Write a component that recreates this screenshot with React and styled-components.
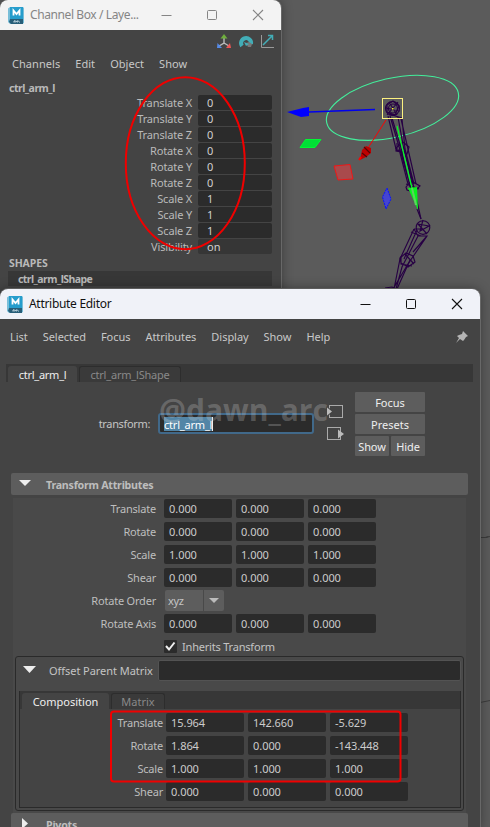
import React from 'react';
import styled, { createGlobalStyle } from 'styled-components';

const GlobalStyle = createGlobalStyle`
  body { margin: 0; background: #5b5b5b; }
  * { box-sizing: border-box; }
`;

const Desktop = styled.div`
  position: relative;
  width: 490px;
  height: 827px;
  overflow: hidden;
  background: #5b5b5b;
  font-family: 'Noto Sans', sans-serif;
  font-size: 11px;
  line-height: 16px;
  color: #c4c4c4;
  white-space: nowrap;
`;

const Overlay = styled.svg`
  position: absolute;
  left: 0;
  top: 0;
  pointer-events: none;
`;

const Window = styled.section`
  position: absolute;
  left: 0;
  top: ${(p) => p.$top}px;
  width: ${(p) => p.$width}px;
  height: ${(p) => p.$height}px;
  background: #444;
  border-radius: 8px 8px 0 0;
  box-shadow: 1px 0 0 #686868, 0 -1px 0 #5c5c5c, 0 0 12px rgba(0, 0, 0, 0.4);
  overflow: hidden;
`;

const TitleBar = styled.header`
  display: flex;
  align-items: center;
  height: 30px;
  padding-left: ${(p) => (p.$active ? 7 : 8)}px;
  background: ${(p) => (p.$active ? '#f0f2f8' : '#f3f3f3')};
  color: ${(p) => (p.$active ? '#111' : '#858585')};
`;

const Title = styled.span`
  flex: 1;
  margin-left: 6px;
  font-size: 12px;
  letter-spacing: ${(p) => p.$tracking || 0}px;
`;

const WindowButtons = styled.div`
  display: flex;
  align-items: center;
  gap: 34px;
  margin-right: ${(p) => p.$right}px;
  svg { display: block; }
`;

const MenuBar = styled.nav`
  display: flex;
  gap: ${(p) => p.$gap}px;
  padding-left: ${(p) => p.$left}px;
  color: #c8c8c8;
  letter-spacing: ${(p) => p.$tracking}px;
`;

const ChannelTools = styled.div`
  display: flex;
  justify-content: flex-end;
  gap: 6px;
  padding: 4px 7px 0 0;
  height: 26px;
`;

const NodeName = styled.h2`
  margin: 9px 0 0 9px;
  height: 14px;
  font-size: 10.5px;
  line-height: 14px;
  font-weight: 700;
  letter-spacing: -0.5px;
  color: #b9b9b9;
`;

const ChannelRow = styled.div`
  display: grid;
  grid-template-columns: 192px 74px;
  column-gap: 6px;
  height: 16px;
  text-align: right;
  letter-spacing: -0.15px;
  color: #bababa;
`;

const ChannelField = styled.div`
  height: 15px;
  padding-left: 9px;
  border-radius: 2px;
  background: ${(p) => (p.$soft ? '#363636' : '#2b2b2b')};
  color: #d0d0d0;
  letter-spacing: 0;
  text-align: left;
`;

const ShapesTitle = styled.h3`
  margin: 1px 0 0 9px;
  height: 15px;
  font-size: 10.5px;
  line-height: 15px;
  letter-spacing: -0.1px;
  color: #b9b9b9;
`;

const ShapeName = styled.div`
  width: 264px;
  height: 15px;
  margin: 0 0 0 8px;
  padding-left: 10px;
  background: #373737;
  font-size: 10.5px;
  font-weight: 700;
  letter-spacing: -0.55px;
  color: #bababa;
`;

const AttributeMenu = styled.div`
  display: flex;
  align-items: center;
  justify-content: space-between;
  height: 36px;
  padding-right: 12px;
`;

const TabBar = styled.div`
  display: flex;
  align-items: flex-end;
  gap: 2px;
  height: 18px;
  padding-left: 2px;
  margin: ${(p) => p.$margin || 0};
  background: #373737;
`;

const Tab = styled.div`
  width: ${(p) => p.$width}px;
  height: 16px;
  text-align: center;
  border-radius: 3px 3px 0 0;
  letter-spacing: ${(p) => p.$tracking || 0}px;
  background: ${(p) => (p.$active ? '#444' : '#3a3a3a')};
  color: ${(p) => (p.$active ? '#efefef' : '#898989')};
  border: ${(p) => (p.$active ? '0' : '1px solid #2d2d2d')};
  border-bottom: 0;
  line-height: ${(p) => (p.$active ? 17 : 16)}px;
`;

const NodeHeader = styled.div`
  display: grid;
  grid-template-columns: 150px 156px 24px 70px;
  column-gap: 8px;
  height: 91px;
  padding-top: 10px;
`;

const NodeType = styled.label`
  margin-top: 24px;
  text-align: right;
  letter-spacing: -0.35px;
`;

const NameInput = styled.div`
  height: 21px;
  margin-top: 21px;
  padding: 2px 4px;
  border: 2px solid #41698a;
  border-radius: 3px;
  background: #2b2b2b;
  color: #fff;
  letter-spacing: -0.2px;
  line-height: 15px;
`;

const Selection = styled.span`
  display: inline-block;
  height: 14px;
  background: #5285a6;
  border-right: 1px solid #eee;
`;

const Connectors = styled.div`
  display: flex;
  flex-direction: column;
  gap: 8px;
  margin: 13px 0 0 5px;
  svg { display: block; }
`;

const ButtonGrid = styled.div`
  display: grid;
  grid-template-columns: 34px 34px;
  grid-auto-rows: 20px;
  gap: 2px;
  margin-left: 1px;
`;

const Button = styled.button`
  grid-column: ${(p) => (p.$wide ? 'span 2' : 'auto')};
  padding: 0;
  border: 0;
  border-radius: 1px;
  background: #5d5d5d;
  color: #eee;
  font: inherit;
  letter-spacing: ${(p) => (p.$wide ? 0 : -0.1)}px;
  line-height: 22px;
`;

const SectionHeader = styled.div`
  display: flex;
  align-items: center;
  width: 457px;
  height: 22px;
  margin-left: 11px;
  border-radius: 2px;
  background: #5d5d5d;
  font-weight: 700;
  color: #bdbdbd;
  svg { margin-left: ${(p) => p.$arrow}px; margin-bottom: 2px; }
  span { margin-left: ${(p) => p.$text}px; padding-top: 2px; font-size: 10.7px; letter-spacing: -0.25px; }
`;

const SectionBody = styled.div`
  width: 453px;
  height: 315px;
  margin: 3px 0 0 13px;
  padding-top: 1px;
  background: #494949;
`;

const AttrRow = styled.div`
  display: grid;
  grid-template-columns: ${(p) => p.$label}px repeat(3, ${(p) => p.$field}px);
  column-gap: 4px;
  height: 23px;
  line-height: 20px;
  > label { text-align: right; margin-right: ${(p) => p.$pad}px; letter-spacing: -0.2px; color: #bebebe; }
`;

const Field = styled.div`
  height: 19px;
  padding-left: 5px;
  border-radius: 2px;
  background: #2b2b2b;
  color: #ccc;
  letter-spacing: -0.05px;
  line-height: 20px;
`;

const Combo = styled.div`
  display: grid;
  grid-template-columns: 38px 20px;
  gap: 1px;
  width: 59px;
  height: 20px;
  margin: -1px 0 0 1px;
  > span { background: #5d5d5d; padding-left: 3px; border-radius: 2px 0 0 2px; line-height: 21px; letter-spacing: -0.3px; }
  > i { display: grid; place-items: center; background: #5d5d5d; border-radius: 0 2px 2px 0; }
`;

const CheckRow = styled.label`
  display: flex;
  align-items: center;
  gap: 5px;
  height: 19px;
  padding-left: 151px;
  letter-spacing: -0.2px;
  svg { display: block; }
`;

const MatrixFrame = styled.div`
  width: 449px;
  height: 155px;
  margin-left: 2px;
  border: 1px solid #2a2a2a;
  border-radius: 3px;
`;

const MatrixHeader = styled.div`
  display: grid;
  grid-template-columns: 33px 109px 303px;
  height: 34px;
  padding-top: 3px;
  line-height: 22px;
  letter-spacing: -0.05px;
  svg { margin: 6px 0 0 7px; }
`;

const MatrixField = styled.div`
  height: 21px;
  border: 1px solid #535353;
  border-radius: 2px;
  background: #2b2b2b;
`;

const MatrixPanel = styled.div`
  width: 442px;
  height: 117px;
  margin-left: 3px;
  border: 1px solid #2a2a2a;
  border-top: 0;
  background: #444;
`;

const MatrixRows = styled.div`
  padding-top: 4px;
`;

const Watermark = styled.div`
  position: absolute;
  left: 159px;
  top: 391px;
  font-family: 'Open Sans', sans-serif;
  font-size: 30px;
  line-height: 38px;
  font-weight: 700;
  color: rgba(210, 210, 210, 0.26);
`;

function MayaLogo() {
  return (
    <svg width="16" height="17" viewBox="0 0 16 17">
      <path d="M0 1.5L2 0H15L16 1V16L14 17H2L0 15Z" fill="#79bed8" />
      <path d="M2 0H15V12H2Z" fill="#269dcc" />
      <path d="M2 12H15V17H3L1 15Z" fill="#285e78" />
      <path d="M5.5 8.5V3.5L8.5 7L11.5 3.5V8.5" fill="none" stroke="#fff" strokeWidth="1.8" />
      <path d="M6 15.5V14L7.2 13.7V15.5M8.3 15L9.3 13.7V15.5M10.4 13.7L11.5 15.5" fill="none" stroke="#c8dce5" />
    </svg>
  );
}

function Controls({ right }) {
  return (
    <WindowButtons $right={right}>
      <svg width="12" height="12"><path d="M1.5 6.5H11.5" stroke="currentColor" /></svg>
      <svg width="12" height="12"><rect x="1.5" y="1.5" width="9" height="9" rx="1" fill="none" stroke="currentColor" /></svg>
      <svg width="12" height="12"><path d="M1 1L11 11M11 1L1 11" stroke="currentColor" strokeWidth="1.1" /></svg>
    </WindowButtons>
  );
}

function Arrow({ w = 12, h = 6, color = '#eee' }) {
  return <svg width={w} height={h}><path d={`M0 0H${w}L${w / 2} ${h}Z`} fill={color} /></svg>;
}

function Viewport() {
  return (
    <Overlay width="490" height="827" viewBox="0 0 490 827">
      <ellipse cx="392.5" cy="107.8" rx="67.5" ry="29.5" transform="rotate(-13 392.5 107.8)" fill="none" stroke="#43ef9c" strokeWidth="1.1" />
      <g fill="none" stroke="#270044" strokeWidth="1.15">
        <circle cx="392.5" cy="108.5" r="7" />
        <circle cx="393" cy="108.5" r="4.5" />
        <path d="M387 105L393 101L399 106L395 115L387 112ZM389 114L402 118M386 108L400 111M389 102L397 115M398 102L387 115" />
        <path d="M388 116L396 149M390 116L400 150L411 189M398 117L404 150L413 184L421 219M402 119L405 149L414 184M392 118L401 148L410 187M401 119L408 149L416 184" />
        <path d="M396 148L403 142L409 147L407 154L401 152L396 151ZM397 143V150L404 152M399 149L408 184M405 150L412 185" />
        <path d="M406 187L411 181L420 186L414 192L407 190ZM406 184L419 189M417 209L421 219" />
        <circle cx="423" cy="227.5" r="6.8" />
        <path d="M423 220L420 231L429 226L418 224L427 234M414 229H422M414 229L418 236H427L408 264L393 289M414 229L400 259L394 289M417 230L404 259M418 236L402 267L396 289M427 236L413 252M411 232L421 236" />
        <path d="M400 258L406 253L413 256L415 262L408 267L401 263ZM401 256V264L412 266M405 254L414 264M385 288L392 287L396 289M410 260L397 289" />
      </g>
      <path d="M375 109.5L309 112" stroke="#0000ee" strokeWidth="1.3" />
      <path d="M287 112L303 108L309 107V116L301 117Z" fill="#0000ff" />
      <path d="M386 120L368 148" stroke="#f00" />
      <path d="M362 150L366 146L371 148V153L366 157L360 160Z" fill="#bd0000" />
      <path d="M364 147L370 153M362 153L367 157" stroke="#560000" strokeWidth="1.2" />
      <path d="M361 157L359 160" stroke="#f00" strokeWidth="2" />
      <path d="M305.5 139.5L321 139.5L315 147.5L300 147.5Z" fill="#00df36" stroke="#00f832" />
      <path d="M334 166L350 164.5L353 179L338 180Z" fill="#a94a4c" stroke="#ef1717" />
      <path d="M387 188L391 199L386 209L382.5 197Z" fill="#4545d2" stroke="#0712ff" strokeDasharray="2 1" />
      <path d="M397 126L412 188" stroke="#00ff26" strokeWidth="1.2" />
      <path d="M408 188L417 187L418 210Z" fill="#08f51d" />
      <path d="M412 188L416 205" stroke="#5dd45e" strokeWidth="2" />
      <rect x="382.5" y="98.5" width="20" height="20" fill="none" stroke="#fcf180" />
      <rect x="392" y="108" width="1.5" height="1.5" fill="#ffff26" />
      <path d="M480 537.5H486L490 536.5M480 702.5L485 701.5L490 700.5" stroke="#3b3b3b" />
    </Overlay>
  );
}

const channels = [
  ['Translate X', '0'], ['Translate Y', '0'], ['Translate Z', '0'],
  ['Rotate X', '0'], ['Rotate Y', '0'], ['Rotate Z', '0'],
  ['Scale X', '1'], ['Scale Y', '1'], ['Scale Z', '1'], ['Visibility', 'on'],
];

function VectorRow({ label, values, matrix }) {
  return (
    <AttrRow $label={matrix ? 142 : 147} $field={matrix ? 78 : 68} $pad={matrix ? -1 : 4}>
      <label>{label}</label>
      {values.map((v, i) => <Field key={i}>{v}</Field>)}
    </AttrRow>
  );
}

function ChannelBox() {
  return (
    <Window $top={0} $width={281} $height={300}>
      <TitleBar>
        <MayaLogo />
        <Title $tracking={-0.4}>Channel Box / Laye...</Title>
        <Controls right={17} />
      </TitleBar>
      <ChannelTools>
        <svg width="16" height="16">
          <path d="M8 4V9L3 12M8 9L13 12" fill="none" stroke="#bbb" strokeWidth="1.4" />
          <path d="M4.5 4.5L8 0L11.5 4.5Z" fill="#6faf3d" /><path d="M1.5 9L6 14H1Z" fill="#568be8" /><path d="M14 9L15 14H10Z" fill="#ed5655" />
        </svg>
        <svg width="16" height="16">
          <path d="M4 12A5 5 0 1 1 13 10" fill="none" stroke="#42adb7" strokeWidth="4" />
          <path d="M11 8L14 10L13 13L10 13L8 9Z" fill="#777" /><path d="M6 8L11 10L8 12" fill="#42adb7" />
        </svg>
        <svg width="14" height="16">
          <path d="M1.5 1V13.5H14" fill="none" stroke="#999" /><path d="M3 11L12 2M8 1.5H12.5V6" fill="none" stroke="#42adb7" strokeWidth="1.5" />
        </svg>
      </ChannelTools>
      <MenuBar $left={12} $gap={15} $tracking={0.05}>
        <span>Channels</span><span>Edit</span><span>Object</span><span>Show</span>
      </MenuBar>
      <NodeName>ctrl_arm_l</NodeName>
      {channels.map(([name, value]) => (
        <ChannelRow key={name}>
          <span>{name}</span>
          <ChannelField $soft={value === 'on'}>{value}</ChannelField>
        </ChannelRow>
      ))}
      <ShapesTitle>SHAPES</ShapesTitle>
      <ShapeName>ctrl_arm_lShape</ShapeName>
    </Window>
  );
}

function AttributeEditor() {
  return (
    <Window $top={289} $width={480} $height={540}>
      <TitleBar $active>
        <MayaLogo />
        <Title $tracking={-0.3}>Attribute Editor</Title>
        <Controls right={17} />
      </TitleBar>
      <AttributeMenu>
        <MenuBar $left={10} $gap={15} $tracking={-0.04}>
          <span>List</span><span>Selected</span><span>Focus</span><span>Attributes</span>
          <span>Display</span><span>Show</span><span>Help</span>
        </MenuBar>
        <svg width="12" height="12"><path d="M7 0L12 5L10 6L8 9L7 10L4 8L0 12L3 7L1 5L3 4L6 3Z" fill="#b5b5b5" /></svg>
      </AttributeMenu>
      <TabBar $margin="9px 7px 0 6px">
        <Tab $active $width={69} $tracking={-0.25}>ctrl_arm_l</Tab>
        <Tab $width={102} $tracking={-0.2}>ctrl_arm_lShape</Tab>
      </TabBar>
      <NodeHeader>
        <NodeType>transform:</NodeType>
        <NameInput><Selection>ctrl_arm_l</Selection></NameInput>
        <Connectors>
          <svg width="18" height="14"><rect x="2.5" y=".5" width="13" height="12" fill="none" stroke="#aaa" /><path d="M0 1V12L6 6.5Z" fill="#444" /><path d="M0 2.5L5 6.5L0 10.5Z" fill="#bbb" /></svg>
          <svg width="18" height="14"><rect x=".5" y=".5" width="13" height="12" fill="none" stroke="#aaa" /><path d="M11 2.5L17 7L11 11.5Z" fill="#bbb" /></svg>
        </Connectors>
        <ButtonGrid>
          <Button $wide>Focus</Button>
          <Button $wide>Presets</Button>
          <Button>Show</Button>
          <Button>Hide</Button>
        </ButtonGrid>
      </NodeHeader>
      <SectionHeader $arrow={8} $text={15}>
        <Arrow /><span>Transform Attributes</span>
      </SectionHeader>
      <SectionBody>
        <VectorRow label="Translate" values={['0.000', '0.000', '0.000']} />
        <VectorRow label="Rotate" values={['0.000', '0.000', '0.000']} />
        <VectorRow label="Scale" values={['1.000', '1.000', '1.000']} />
        <VectorRow label="Shear" values={['0.000', '0.000', '0.000']} />
        <AttrRow $label={147} $field={68} $pad={4}>
          <label>Rotate Order</label>
          <Combo><span>xyz</span><i><Arrow w={10} h={5} color="#bbb" /></i></Combo>
        </AttrRow>
        <VectorRow label="Rotate Axis" values={['0.000', '0.000', '0.000']} />
        <CheckRow>
          <svg width="13" height="13"><rect width="13" height="13" rx="1" fill="#2b2b2b" /><path d="M2 6L5 9.5L10.5 2.5" fill="none" stroke="#eee" strokeWidth="2" /></svg>
          Inherits Transform
        </CheckRow>
        <MatrixFrame>
          <MatrixHeader><Arrow w={13} h={7} /><span>Offset Parent Matrix</span><MatrixField /></MatrixHeader>
          <MatrixPanel>
            <TabBar>
              <Tab $active $width={87}>Composition</Tab>
              <Tab $width={54}>Matrix</Tab>
            </TabBar>
            <MatrixRows>
              <VectorRow matrix label="Translate" values={['15.964', '142.660', '-5.629']} />
              <VectorRow matrix label="Rotate" values={['1.864', '0.000', '-143.448']} />
              <VectorRow matrix label="Scale" values={['1.000', '1.000', '1.000']} />
              <VectorRow matrix label="Shear" values={['0.000', '0.000', '0.000']} />
            </MatrixRows>
          </MatrixPanel>
        </MatrixFrame>
      </SectionBody>
      <SectionHeader $arrow={11} $text={18}>
        <svg width="6" height="11"><path d="M0 0L6 5.5L0 11Z" fill="#eee" /></svg><span>Pivots</span>
      </SectionHeader>
    </Window>
  );
}

export default function App() {
  return (
    <>
      <GlobalStyle />
      <Desktop>
        <Viewport />
        <ChannelBox />
        <AttributeEditor />
        <Watermark>@dawn_arc</Watermark>
        <Overlay width="490" height="827">
          <ellipse cx="185.3" cy="163.2" rx="59.5" ry="86" fill="none" stroke="#f00000" strokeWidth="2" />
          <rect x="111" y="711.5" width="289.5" height="70" rx="3" fill="none" stroke="#f00000" strokeWidth="2" />
        </Overlay>
      </Desktop>
    </>
  );
}
